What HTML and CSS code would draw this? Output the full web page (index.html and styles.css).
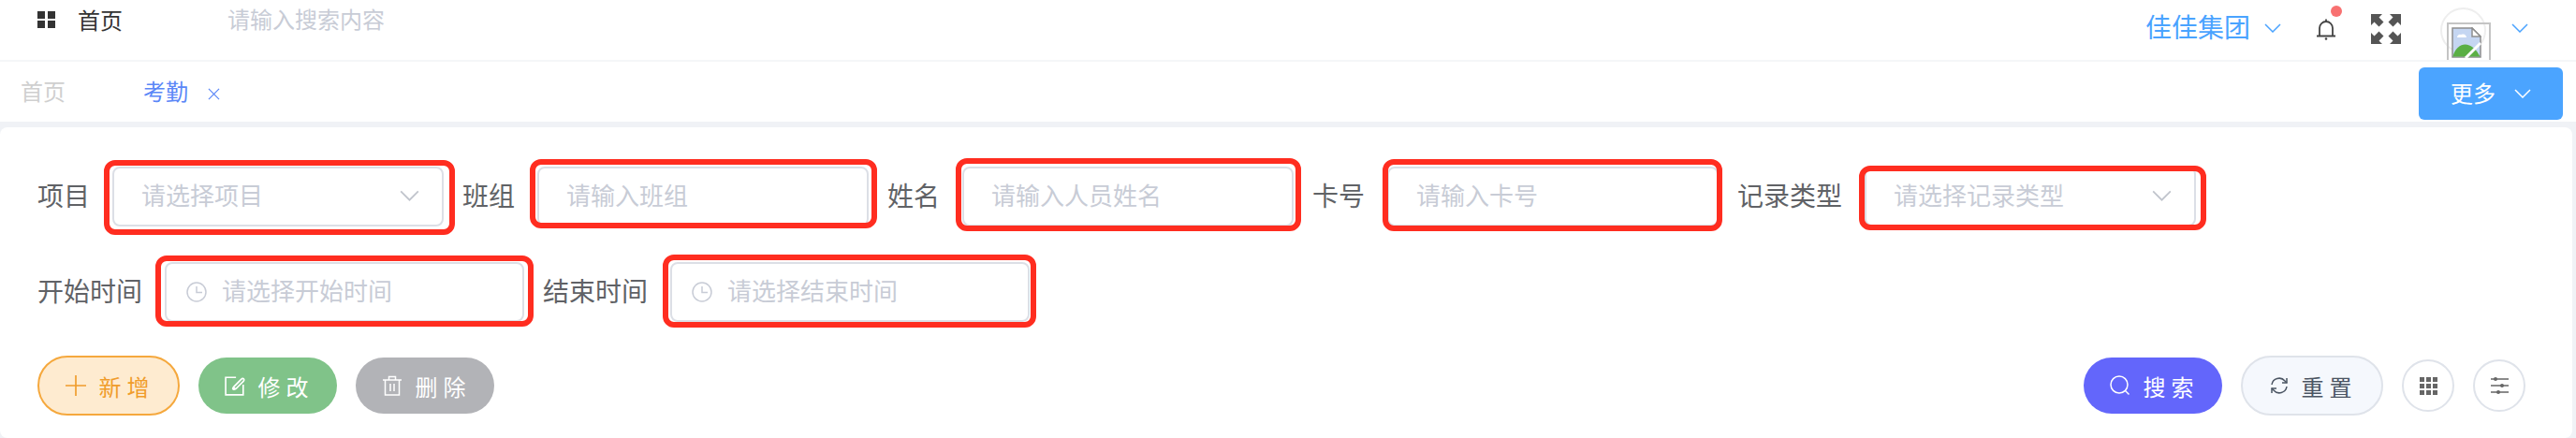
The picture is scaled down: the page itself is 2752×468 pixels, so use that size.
FILE: index.html
```html
<!DOCTYPE html>
<html lang="zh-CN">
<head>
  <meta charset="UTF-8">
  <meta name="viewport" content="width=device-width, initial-scale=1.0">
  <title>考勤</title>
  <link rel="stylesheet" href="styles.css">
</head>
<body>
  <header class="topbar">
    <div class="topbar-left">
      <svg class="menu-icon" viewBox="0 0 19 18"><path d="M0 0h8v8H0zM11 0h8v8h-8zM0 10h8v8H0zM11 10h8v8h-8z" fill="#333"/></svg>
      <span class="home-link">首页</span>
      <span class="top-search">请输入搜索内容</span>
    </div>
    <div class="topbar-right">
      <span class="company">佳佳集团</span>
      <svg class="chevron chevron-company" viewBox="0 0 18 10"><path d="M1 1l8 8 8-8"/></svg>
      <div class="bell">
        <svg viewBox="0 0 24 24" width="24" height="24"><path d="M5 19V11a7 7 0 0 1 14 0v8M2 19.500h20M12 1.500v2" fill="none" stroke="#444" stroke-width="1.800"/><circle cx="12" cy="22.500" r="1.300" fill="#444"/></svg>
        <span class="bell-dot"></span>
      </div>
      <svg class="fullscreen" viewBox="0 0 32 32"><path d="M0 0h12L8.500 3.500l5 5-5 5-5-5L0 12zM32 0v12l-3.500-3.500-5 5-5-5 5-5L20 0zM0 32V20l3.500 3.500 5-5 5 5-5 5L12 32zM32 32H20l3.500-3.500-5-5 5-5 5 5L32 20z" fill="#555"/></svg>
      <div class="avatar">
        <div class="avatar-ring"></div>
        <div class="broken-img">
          <svg viewBox="0 0 32 33" width="32" height="33">
            <path d="M1 1h21l9 9v22H1z" fill="#c5d6f2" stroke="#8e8e8e" stroke-width="1.500"/>
            <path d="M22 1v9h9z" fill="#fff" stroke="#8e8e8e" stroke-width="1.500"/>
            <path d="M6 11a3 3 0 0 1 4-3 4 4 0 0 1 6 3z" fill="#fff"/>
            <path d="M1.500 31.500c2-9 8-13 13-13 6 0 12 5 16 13z" fill="#5aaf45"/>
            <path d="M15 33l16-16" stroke="#fff" stroke-width="3"/>
          </svg>
        </div>
      </div>
      <svg class="chevron chevron-user" viewBox="0 0 18 10"><path d="M1 1l8 8 8-8"/></svg>
    </div>
  </header>

  <nav class="tabs">
    <div class="tab-list">
      <span class="tab">首页</span>
      <span class="tab tab-active">考勤</span>
      <svg class="tab-close" viewBox="0 0 14 14"><path d="M1 1l12 12M13 1L1 13"/></svg>
    </div>
    <button class="more-btn"><span class="more-text">更多</span>
      <svg class="chevron chevron-more" viewBox="0 0 18 10"><path d="M1 1l8 8 8-8"/></svg>
    </button>
  </nav>

  <main class="card">
    <div class="form-row row-first">
      <label class="form-label">项目</label>
      <div class="field mark-1">
        <input class="field-input" placeholder="请选择项目">
        <svg class="chevron chevron-select" viewBox="0 0 18 10"><path d="M1 1l8 8 8-8"/></svg>
      </div>
      <label class="form-label">班组</label>
      <div class="field mark-2"><input class="field-input" placeholder="请输入班组"></div>
      <label class="form-label">姓名</label>
      <div class="field mark-3"><input class="field-input" placeholder="请输入人员姓名"></div>
      <label class="form-label">卡号</label>
      <div class="field mark-4"><input class="field-input" placeholder="请输入卡号"></div>
      <label class="form-label">记录类型</label>
      <div class="field mark-5">
        <input class="field-input" placeholder="请选择记录类型">
        <svg class="chevron chevron-select" viewBox="0 0 18 10"><path d="M1 1l8 8 8-8"/></svg>
      </div>
    </div>

    <div class="form-row row-second">
      <label class="form-label">开始时间</label>
      <div class="field field-date mark-6">
        <svg class="clock" viewBox="0 0 22 22"><circle cx="11" cy="11" r="10"/><path d="M11 5v6.500h6"/></svg>
        <input class="field-input" placeholder="请选择开始时间">
      </div>
      <label class="form-label">结束时间</label>
      <div class="field field-date mark-7">
        <svg class="clock" viewBox="0 0 22 22"><circle cx="11" cy="11" r="10"/><path d="M11 5v6.500h6"/></svg>
        <input class="field-input" placeholder="请选择结束时间">
      </div>
    </div>

    <div class="actions">
      <div class="action-group">
        <button class="btn btn-add">
          <svg class="btn-icon" viewBox="0 0 20 20"><path d="M10 0v20M0 10h20"/></svg>新增
        </button>
        <button class="btn btn-edit">
          <svg class="btn-icon" viewBox="0 0 20 20"><path d="M11 2H1v17h17V9"/><path d="M10 12c-1 1-2 0-1-1l7-7c2-2 4 0 2 2l-7 7c-3 2-4 0-2-2l5-5"/></svg>修改
        </button>
        <button class="btn btn-del">
          <svg class="btn-icon" viewBox="0 0 20 22"><path d="M0 5h20M2.500 5v16h15V5M6.500 5V1.500h7V5M8 9v8M12 9v8"/></svg>删除
        </button>
      </div>
      <div class="action-group">
        <button class="btn btn-search">
          <svg class="btn-icon" viewBox="0 0 22 22"><circle cx="10" cy="10" r="9"/><path d="M16.500 16.500l4 4"/></svg>搜索
        </button>
        <button class="btn btn-reset">
          <svg class="btn-icon icon-reset" viewBox="0 0 20 20"><path d="M2 9a8 8 0 0 1 14-4l2 2M18 11a8 8 0 0 1-14 4l-2-2"/><path d="M18 2v5h-5M2 18v-5h5" stroke-width="1.500"/></svg>重置
        </button>
        <button class="btn-round">
          <svg viewBox="0 0 19 19" width="19" height="19"><path d="M0 0h5v5H0zM7 0h5v5H7zM14 0h5v5h-5zM0 7h5v5H0zM7 7h5v5H7zM14 7h5v5h-5zM0 14h5v5H0zM7 14h5v5H7zM14 14h5v5h-5z" fill="#666"/></svg>
        </button>
        <button class="btn-round">
          <svg viewBox="0 0 19 18" width="19" height="18"><path d="M0 2h19M0 9h19M0 16h19" stroke="#666" stroke-width="1.500"/><circle cx="5" cy="2" r="2" fill="#666"/><circle cx="12" cy="9" r="2" fill="#666"/><circle cx="8" cy="16" r="2" fill="#666"/></svg>
        </button>
      </div>
    </div>
  </main>
</body>
</html>
```

FILE: styles.css
```css
* {
  box-sizing: border-box;
}

html, body {
  height: 100%;
}

body {
  margin: 0;
  background: #f0f2f6;
  font-family: "Noto Sans CJK SC", "Noto Sans", sans-serif;
  overflow: hidden;
}

button {
  font-family: inherit;
  cursor: pointer;
}

.chevron {
  fill: none;
  stroke: #4aa3ff;
  stroke-width: 1.500;
}

/* top bar */
.topbar {
  height: 66px;
  display: flex;
  justify-content: space-between;
  background: #fff;
  border-bottom: 2px solid #f5f6f8;
  overflow: hidden;
}

.topbar-left {
  display: flex;
  align-items: flex-start;
  padding-left: 40px;
}

.menu-icon {
  width: 19px;
  height: 18px;
  margin-top: 12px;
}

.home-link {
  margin-left: 24px;
  margin-top: 3px;
  font-size: 24px;
  line-height: 35px;
  color: #333;
}

.top-search {
  margin-left: 112px;
  margin-top: 2px;
  font-size: 24px;
  line-height: 35px;
  color: #c8ccd6;
}

.topbar-right {
  display: flex;
  align-items: flex-start;
  padding-right: 51px;
}

.company {
  font-size: 28px;
  line-height: 40px;
  margin-top: 8px;
  color: #4aa3ff;
}

.chevron-company {
  width: 18px;
  height: 10px;
  margin: 25px 0 0 15px;
}

.bell {
  position: relative;
  width: 24px;
  height: 24px;
  margin: 19px 0 0 36px;
}

.bell-dot {
  position: absolute;
  top: -13px;
  left: 17px;
  width: 12px;
  height: 12px;
  border-radius: 50%;
  background: #f87171;
}

.fullscreen {
  width: 32px;
  height: 32px;
  margin: 15px 0 0 36px;
}

.avatar {
  position: relative;
  width: 54px;
  margin-left: 42px;
}

.avatar-ring {
  position: absolute;
  top: 8px;
  left: 0;
  width: 49px;
  height: 49px;
  border: 2px solid #eeeeee;
  border-radius: 50%;
}

.broken-img {
  position: absolute;
  top: 24px;
  left: 7px;
  width: 47px;
  height: 47px;
  padding: 3px;
  border: 2px solid #c4c4c4;
}

.chevron-user {
  width: 18px;
  height: 10px;
  margin: 25px 0 0 22px;
}

/* tabs */
.tabs {
  height: 64px;
  display: flex;
  justify-content: space-between;
  align-items: flex-start;
  padding-right: 14px;
  background: #fff;
}

.tab-list {
  display: flex;
  align-items: center;
  height: 64px;
  padding-left: 22px;
}

.tab {
  font-size: 24px;
  margin-bottom: 4px;
  color: #cfcfcf;
}

.tab-active {
  margin-left: 83px;
  color: #5b87f7;
}

.tab-close {
  width: 13px;
  height: 13px;
  margin: 4px 0 0 21px;
  fill: none;
  stroke: #5b87f7;
  stroke-width: 1.300;
}

.more-btn {
  display: flex;
  align-items: center;
  justify-content: center;
  width: 154px;
  height: 56px;
  margin-top: 6px;
  border: 0;
  border-radius: 6px;
  background: #4ba4ff;
  color: #fff;
  font-size: 24px;
}

.more-text {
  margin-bottom: 4px;
}

.chevron-more {
  width: 18px;
  height: 10px;
  margin-left: 20px;
  stroke: #fff;
}

/* search card */
.card {
  height: 332px;
  margin: 6px 4px 0 0;
  padding: 42px 50px 0 40px;
  background: #fff;
  border-radius: 8px;
}

.form-row {
  display: flex;
  align-items: center;
  gap: 24px;
}

.row-second {
  margin-top: 38px;
}

.form-label {
  padding-bottom: 5px;
  font-size: 28px;
  line-height: 40px;
  color: #606266;
  white-space: nowrap;
}

.field {
  position: relative;
  display: flex;
  align-items: center;
  width: 354px;
  height: 64px;
  margin-right: -4px;
  padding: 0 24px 0 29px;
  border: 2px solid #dcdfe6;
  border-radius: 8px;
  background: #fff;
}

.field-date {
  width: 384px;
  padding-left: 21px;
}

.field-input {
  flex: 1;
  min-width: 0;
  border: 0;
  outline: 0;
  padding: 0 0 5px;
  font-family: inherit;
  font-size: 26px;
  color: #606266;
  background: transparent;
}

.field-input::placeholder {
  color: #c8ccd6;
}

.chevron-select {
  width: 21px;
  height: 12px;
  margin-bottom: 2px;
  stroke: #c0c4cc;
}

.clock {
  flex: none;
  width: 22px;
  height: 22px;
  margin-right: 16px;
  fill: none;
  stroke: #c8ccd6;
  stroke-width: 1.500;
}

/* red marks drawn over the fields */
.field::after {
  content: "";
  position: absolute;
  border: 6px solid #ff2d20;
  border-radius: 12px;
  pointer-events: none;
}

.mark-1::after { inset: -9px -14px -11px -11px; }
.mark-2::after { inset: -10px -11px -4px -10px; }
.mark-3::after { inset: -11px -10px -7px -9px; }
.mark-4::after { inset: -10px -6px -7px -7px; }
.mark-5::after { inset: -3px -13px -6px -8px; }
.mark-6::after { inset: -9px -12px -7px -12px; }
.mark-7::after { inset: -10px -9px -8px -10px; }

/* buttons */
.actions {
  display: flex;
  justify-content: space-between;
  align-items: center;
  margin-top: 36px;
}

.action-group {
  display: flex;
  align-items: center;
  gap: 20px;
}

.btn {
  display: inline-flex;
  align-items: center;
  justify-content: center;
  width: 148px;
  height: 60px;
  padding: 0 0 0 3px;
  border: 0;
  border-radius: 32px;
  font-size: 24px;
  letter-spacing: 6px;
}

.btn-icon {
  width: 22px;
  height: 22px;
  margin-right: 14px;
  fill: none;
  stroke: currentColor;
  stroke-width: 1.500;
}

.btn-add {
  width: 152px;
  height: 64px;
  border: 2px solid #f5a83d;
  background: #feebd0;
  color: #f09c2b;
}

.btn-edit {
  background: #80c389;
  color: #fff;
}

.btn-del {
  background: #b2b3b7;
  color: #fff;
}

.btn-search {
  background: #6366fb;
  color: #fff;
}

.btn-reset {
  width: 152px;
  height: 64px;
  border: 2px solid #dfe3ea;
  background: #f5f8fd;
  color: #4b5563;
}

.icon-reset {
  width: 20px;
  height: 20px;
}

.btn-round {
  display: flex;
  align-items: center;
  justify-content: center;
  width: 56px;
  height: 56px;
  padding: 0;
  border: 2px solid #dfe3ea;
  border-radius: 50%;
  background: #fff;
}
```
